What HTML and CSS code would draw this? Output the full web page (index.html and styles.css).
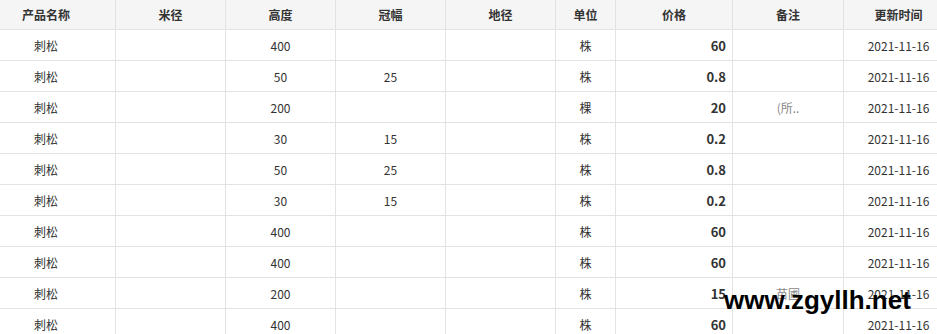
FILE: index.html
```html
<!DOCTYPE html>
<html lang="zh-CN">
<head>
<meta charset="utf-8">
<title>价格表</title>
<link rel="stylesheet" href="styles.css">
</head>
<body>
<div class="viewport">
  <table class="price-table">
    <colgroup>
      <col class="c-name"><col class="c-w"><col class="c-w"><col class="c-w"><col class="c-w">
      <col class="c-unit"><col class="c-price"><col class="c-note"><col class="c-date">
    </colgroup>
    <thead>
      <tr><th>产品名称</th><th>米径</th><th>高度</th><th>冠幅</th><th>地径</th><th>单位</th><th>价格</th><th>备注</th><th>更新时间</th></tr>
    </thead>
    <tbody>
      <tr><td>刺松</td><td></td><td>400</td><td></td><td></td><td>株</td><td class="price">60</td><td class="note"></td><td>2021-11-16</td></tr>
      <tr><td>刺松</td><td></td><td>50</td><td>25</td><td></td><td>株</td><td class="price">0.8</td><td class="note"></td><td>2021-11-16</td></tr>
      <tr><td>刺松</td><td></td><td>200</td><td></td><td></td><td>棵</td><td class="price">20</td><td class="note">(所..</td><td>2021-11-16</td></tr>
      <tr><td>刺松</td><td></td><td>30</td><td>15</td><td></td><td>株</td><td class="price">0.2</td><td class="note"></td><td>2021-11-16</td></tr>
      <tr><td>刺松</td><td></td><td>50</td><td>25</td><td></td><td>株</td><td class="price">0.8</td><td class="note"></td><td>2021-11-16</td></tr>
      <tr><td>刺松</td><td></td><td>30</td><td>15</td><td></td><td>株</td><td class="price">0.2</td><td class="note"></td><td>2021-11-16</td></tr>
      <tr><td>刺松</td><td></td><td>400</td><td></td><td></td><td>株</td><td class="price">60</td><td class="note"></td><td>2021-11-16</td></tr>
      <tr><td>刺松</td><td></td><td>400</td><td></td><td></td><td>株</td><td class="price">60</td><td class="note"></td><td>2021-11-16</td></tr>
      <tr><td>刺松</td><td></td><td>200</td><td></td><td></td><td>株</td><td class="price">15</td><td class="note">苗圃</td><td>2021-11-16</td></tr>
      <tr><td>刺松</td><td></td><td>400</td><td></td><td></td><td>株</td><td class="price">60</td><td class="note"></td><td>2021-11-16</td></tr>
    </tbody>
  </table>
  <div class="watermark">www.zgyllh.net</div>
</div>
</body>
</html>
```

FILE: styles.css
```css
html, body {
  margin: 0;
  padding: 0;
  background: #fff;
}
.viewport {
  position: relative;
  width: 937px;
  height: 334px;
  overflow: hidden;
}
.price-table {
  margin-left: -23px;
  width: 977px;
  table-layout: fixed;
  border-collapse: separate;
  border-spacing: 0;
  font-family: "Noto Sans CJK SC", "Noto Sans", sans-serif;
  font-size: 12px;
  color: #333;
}
.c-name { width: 139px; }
.c-w { width: 110px; }
.c-unit { width: 60px; }
.c-price { width: 117px; }
.c-note { width: 111px; }
.c-date { width: 110px; }
.price-table th,
.price-table td {
  box-sizing: border-box;
  border: 0;
  border-right: 1px solid #e3e3e3;
  border-bottom: 1px solid #e3e3e3;
  text-align: center;
  padding: 0 6px;
  white-space: nowrap;
  overflow: hidden;
}
.price-table th {
  height: 30px;
  background: #f5f5f5;
  font-weight: bold;
  color: #333;
}
.price-table td {
  height: 31px;
}
.price-table td.price {
  text-align: right;
  font-weight: bold;
  font-size: 13px;
}
.price-table td.note {
  color: #888;
}
.watermark {
  position: absolute;
  left: 724px;
  top: 287px;
  font-family: "Liberation Sans", Arial, sans-serif;
  font-weight: bold;
  font-size: 26px;
  line-height: 1;
  color: #000;
}
```
